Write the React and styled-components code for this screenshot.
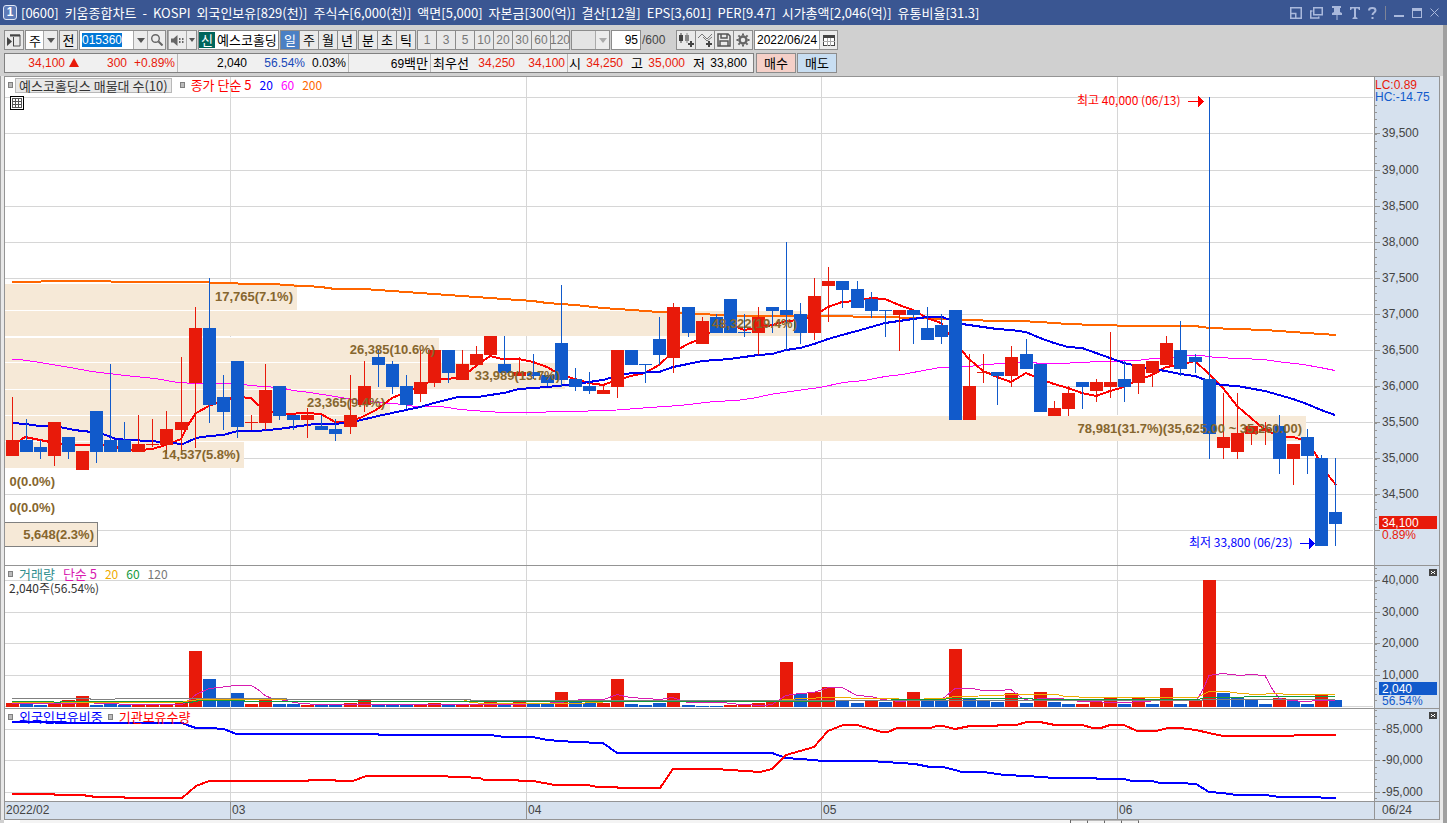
import React from 'react'
import styled, { createGlobalStyle } from 'styled-components';

const UP = "#e81a0a";
const DOWN = "#115acb";
const GRID = "#d6d6d6";
const FRAME = "#949494";
const AXIS_BG = "#d6e1ee";
const BAND = "#f6e9d7";
const NUMBER_FONT = '"Liberation Sans", "Noto Sans CJK KR", sans-serif';

// [color, high, open/close top, open/close bottom, low, volume top]
const candles = [
  ["r", 397, 440, 456, 456, 703], ["b", 419, 440, 452, 452, 703], ["b", 440, 447, 452, 459, 705],
  ["r", 422, 422, 456, 466, 703], ["b", 437, 437, 452, 459, 700], ["r", 451, 451, 470, 470, 696],
  ["b", 411, 411, 452, 463, 705], ["b", 364, 440, 452, 452, 704], ["b", 422, 440, 452, 452, 705],
  ["r", 415, 444, 452, 452, 705], ["r", 419, 444, 445, 447, 704], ["r", 411, 429, 445, 454, 704],
  ["r", 357, 422, 430, 451, 702], ["r", 307, 328, 383, 448, 651], ["b", 278, 328, 405, 423, 679],
  ["b", 375, 397, 412, 430, 700], ["b", 361, 361, 427, 438, 693], ["r", 415, 422, 423, 430, 704],
  ["r", 364, 390, 423, 430, 700], ["b", 386, 386, 416, 420, 704], ["b", 415, 415, 420, 430, 704],
  ["r", 408, 415, 420, 438, 705], ["b", 415, 426, 430, 430, 705], ["b", 419, 429, 434, 441, 704],
  ["r", 375, 415, 427, 434, 703], ["r", 361, 386, 405, 412, 700], ["b", 350, 357, 365, 387, 704],
  ["b", 361, 364, 387, 394, 704], ["b", 375, 386, 405, 409, 705], ["r", 350, 382, 394, 402, 704],
  ["r", 350, 350, 383, 387, 703], ["b", 350, 350, 373, 383, 705], ["r", 350, 364, 380, 380, 705],
  ["r", 346, 354, 365, 365, 704], ["r", 336, 336, 355, 355, 702], ["b", 336, 364, 373, 373, 705],
  ["r", 357, 372, 376, 376, 702], ["b", 354, 372, 376, 379, 704], ["b", 375, 375, 383, 386, 703],
  ["b", 285, 343, 380, 387, 692], ["b", 368, 379, 387, 391, 702], ["b", 372, 386, 391, 394, 703],
  ["r", 386, 390, 394, 394, 703], ["r", 350, 350, 387, 398, 679], ["b", 350, 350, 365, 365, 704],
  ["b", 364, 364, 365, 383, 705], ["b", 317, 339, 355, 365, 703], ["r", 303, 307, 358, 373, 693],
  ["b", 307, 307, 333, 337, 705], ["r", 317, 321, 344, 344, 706], ["b", 314, 317, 333, 333, 706],
  ["b", 299, 299, 333, 333, 705], ["b", 314, 332, 333, 337, 705], ["r", 307, 317, 333, 355, 703],
  ["b", 307, 307, 311, 333, 701], ["b", 242, 310, 315, 351, 662], ["b", 303, 314, 333, 344, 694],
  ["r", 278, 296, 333, 340, 692], ["r", 267, 281, 286, 322, 687], ["b", 281, 281, 290, 308, 700],
  ["b", 281, 289, 308, 308, 703], ["b", 292, 299, 311, 318, 700], ["b", 310, 310, 311, 337, 702],
  ["r", 310, 310, 315, 351, 700], ["b", 310, 310, 315, 344, 692], ["b", 307, 328, 340, 340, 700],
  ["b", 314, 325, 337, 344, 700], ["b", 310, 310, 420, 420, 649], ["r", 354, 386, 420, 420, 699],
  ["r", 354, 372, 373, 383, 700], ["b", 372, 372, 376, 405, 702], ["r", 346, 357, 376, 387, 693],
  ["b", 339, 354, 369, 369, 703], ["b", 364, 364, 412, 412, 692], ["r", 401, 408, 416, 416, 702],
  ["r", 386, 393, 409, 416, 704], ["b", 382, 382, 387, 409, 704], ["r", 379, 382, 391, 402, 702],
  ["r", 332, 382, 387, 398, 698], ["b", 361, 379, 387, 402, 704], ["r", 364, 364, 383, 394, 698],
  ["r", 361, 361, 373, 387, 704], ["r", 336, 343, 365, 365, 688], ["b", 321, 350, 369, 376, 704],
  ["b", 354, 357, 362, 373, 700], ["b", 97, 379, 434, 459, 580], ["r", 393, 437, 448, 459, 693],
  ["r", 393, 433, 452, 459, 698], ["r", 426, 426, 434, 445, 700], ["r", 422, 429, 431, 445, 704],
  ["b", 415, 426, 459, 474, 698], ["r", 444, 444, 459, 485, 701], ["b", 429, 437, 456, 474, 704],
  ["b", 455, 458, 546, 546, 695], ["b", 458, 512, 524, 546, 700],
];

// days whose volume colour is not the same as the candle colour
const volumeFlip = { 4: "r", 39: "r", 49: "b", 51: "r", 52: "r", 54: "r", 55: "r", 64: "r", 61: "r", 67: "r", 68: "b", 69: "b", 73: "r", 74: "b", 75: "b", 76: "r", 81: "b", 84: "r", 85: "r", 86: "b", 87: "b", 88: "b", 89: "b", 90: "r", 91: "b", 93: "r" };

const candleX = i => 12 + 14 * i + Math.floor(i / 12);

const priceLines = [
  { color: "#ff00ff", width: 1, points: "12,359 20,359 40,362 70,367 92,371 125,375 155,378 178,382 195,383 232,383 262,386 280,387 293,390 310,392 335,396 360,400 378,402 404,404 415,406 441,406 460,409 487,411 503,412 525,412 567,411 610,410 650,407 680,405 714,401 737,400 757,397 770,394 797,390 820,387 843,382 865,380 885,376 903,374 918,371 940,367 969,366 985,364 1004,363 1026,361 1040,363 1060,363 1100,361 1137,360 1153,358 1170,357 1187,355 1202,355 1215,357 1240,358 1263,359 1277,361 1303,364 1320,367 1335,370" },
  { color: "#ff6600", width: 2, points: "12,282 40,282 42,281 110,281 112,282 209,282 211,283 237,283 239,284 279,284 281,285 306,286 321,287 335,289 364,289 420,293 462,296 504,299 533,301 547,303 575,305 603,308 632,310 659,312 680,313 695,314 725,315 744,316 820,316 885,317 941,319 969,320 997,321 1020,321 1040,322 1068,324 1096,325 1138,326 1195,326 1209,328 1237,329 1265,330 1293,332 1321,334 1336,335" },
  { color: "#ff0000", width: 2, points: "12,446 25,437 40,440 55,443 74,445 110,445 125,450 140,450 152,449 166,445 181,439 188,425 196,413 209,406 223,400 238,397 251,398 258,405 272,412 286,414 307,413 321,414 335,422 345,422 360,418 376,410 392,398 406,392 420,386 434,380 448,379 462,377 476,366 490,356 502,359 519,359 533,362 547,367 561,375 575,379 589,383 603,385 617,380 631,376 645,373 659,365 673,352 688,344 702,338 712,331 730,325 737,327 744,330 758,328 772,325 786,321 800,320 814,316 828,307 842,302 857,301 871,298 885,299 899,305 913,310 927,318 941,323 949,334 955,343 962,351 969,359 983,371 997,377 1011,382 1026,373 1040,379 1054,384 1068,388 1082,393 1096,396 1110,391 1124,387 1138,380 1152,375 1166,367 1180,365 1195,361 1209,374 1223,388 1237,406 1251,418 1265,430 1279,436 1293,437 1307,441 1318,458 1321,466 1328,475 1336,485" },
  { color: "#0000ee", width: 2, points: "12,423 25,424 40,426 60,427 74,430 92,432 103,434 116,439 130,440 150,441 162,442 170,443 183,444 196,438 209,436 223,435 238,431 256,431 279,429 300,426 315,424 335,424 350,422 357,421 378,416 406,410 420,407 434,403 458,397 478,397 490,395 504,393 519,389 547,387 575,384 589,382 603,380 617,376 631,373 659,372 673,367 688,364 702,361 730,359 758,355 772,354 786,350 800,348 814,344 828,339 842,335 857,331 871,327 885,323 899,321 913,319 927,317 942,317 962,324 983,327 997,329 1011,330 1026,332 1040,338 1054,343 1068,347 1082,348 1096,353 1110,358 1124,363 1138,366 1152,369 1166,371 1180,374 1195,376 1203,379 1213,382 1220,385 1237,386 1265,391 1293,399 1307,404 1321,410 1335,415" },
];

const volumeLines = [
  { color: "#d81bb0", width: 1, points: "12,703 70,703 85,702 103,703 135,704 182,704 188,701 196,694 209,688 228,686 234,685 251,685 258,689 265,695 272,698 285,700 300,703 320,704 512,704 540,703 560,702 582,699 604,699 617,694 630,697 660,699 672,697 688,702 722,702 740,704 765,705 772,704 786,695 800,693 814,692 828,687 842,687 857,695 871,696 882,699 900,701 913,700 943,698 955,688 972,688 983,690 1000,690 1011,689 1022,698 1030,700 1040,698 1061,698 1080,701 1124,702 1160,700 1190,700 1197,699 1203,689 1209,675 1222,673 1240,675 1251,674 1265,675 1272,688 1279,698 1290,700 1305,701 1320,700 1335,700" },
  { color: "#efab00", width: 1, points: "12,702 180,702 190,700 202,699 257,699 272,699 463,699 470,702 485,703 580,703 590,702 617,701 770,701 786,699 805,698 828,697 850,697 852,698 892,698 905,699 943,698 955,696 1003,695 1005,694 1057,694 1065,696 1092,697 1197,697 1209,691 1226,691 1240,693 1258,694 1275,693 1290,694 1335,694" },
  { color: "#129a3c", width: 1, points: "12,701 47,701 60,702 61,701 175,701 190,702 200,700 244,700 245,701 780,701 890,700 893,699 943,699 950,698 1032,698 1034,699 1198,699 1205,697 1243,697 1245,696 1335,696" },
  { color: "#808080", width: 1, points: "12,698 90,698 91,699 140,698 286,698 287,699 470,699 471,700 1200,700 1205,699 1335,699" },
];

const holdingLines = [
  { color: "#0000ff", width: 2, points: "12,722 55,722 56,723 182,723 190,726 196,728 210,728 224,729 236,734 378,734 379,735 490,735 505,737 533,737 547,740 575,742 603,743 617,753 772,753 786,758 814,760 822,761 870,761 900,763 915,764 930,767 943,767 955,770 962,772 983,772 1005,775 1027,776 1055,778 1096,778 1097,779 1124,779 1132,781 1152,781 1160,783 1180,783 1196,784 1209,792 1222,793 1237,795 1265,795 1280,797 1320,797 1322,798 1336,798" },
  { color: "#ff0000", width: 2, points: "12,794 54,794 55,795 82,795 96,797 124,797 125,798 182,798 189,792 196,786 209,781 308,781 309,780 335,780 336,781 353,781 366,776 434,776 462,777 480,778 484,780 518,780 519,781 533,781 555,785 588,785 597,787 617,787 618,788 660,788 673,769 716,769 730,770 745,771 760,772 772,769 786,755 800,751 814,747 828,731 843,725 857,725 871,729 882,732 888,732 897,728 930,728 937,726 943,726 955,729 960,728 970,726 997,726 998,725 1016,725 1027,722 1040,722 1055,725 1082,725 1093,728 1101,728 1110,725 1124,725 1137,731 1156,731 1168,728 1180,728 1196,730 1209,733 1223,736 1293,736 1295,735 1336,735" },
];

// price-range volume bands: [top, height, right edge]
const bands = [
  [284, 26, 297], [311, 25, 802], [338, 24, 439], [363, 26, 565],
  [390, 25, 390], [416, 25, 1306], [442, 26, 244],
];

const bandLabels = [
  [293, 301, "17,765(7.1%)"], [797, 328, "48,322(19.4%)"], [435, 354, "26,385(10.6%)"],
  [560, 380, "33,989(13.7%)"], [385, 407, "23,365(9.4%)"],
  [1302, 433, "78,981(31.7%)(35,625.00 ~ 35,260.00)"], [240, 459, "14,537(5.8%)"],
  [55, 486, "0(0.0%)"], [55, 512, "0(0.0%)"], [94, 539, "5,648(2.3%)"],
];

const priceRows = [97, 133, 170, 206, 242, 278, 314, 350, 386, 422, 458, 494, 530];
const months = [[230, "03"], [526, "04"], [821, "05"], [1117, "06"]];

const titleParts = [
  "[0600]", "키움종합차트", "-", "KOSPI", "외국인보유[829(천)]", "주식수[6,000(천)]", "액면[5,000]",
  "자본금[300(억)]", "결산[12월]", "EPS[3,601]", "PER[9.47]", "시가총액[2,046(억)]", "유통비율[31.3]",
];

function range(from, to, step) {
  const list = [];
  for (let v = from; v <= to; v += step) list.push(Math.round(v));
  return list;
}

function Grid({ rows, top, bottom }) {
  return (
    <g fill={GRID}>
      {rows.map(y => <rect key={y} x="5" y={y} width="1368" height="1" />)}
      {months.map(([x]) => <rect key={x} x={x} y={top} width="1" height={bottom - top} />)}
    </g>
  );
}

function Lines({ lines }) {
  return lines.map(({ color, width, points }) => (
    <polyline
      key={color}
      points={points}
      fill="none"
      stroke={color}
      strokeWidth={width}
      transform={width === 1 ? "translate(0 0.5)" : undefined}
    />
  ));
}

function Ticks({ major, minor }) {
  return (
    <g fill={FRAME}>
      {major.map(y => <rect key={"a" + y} x="1375" y={y} width="5" height="1" />)}
      {minor.map(y => <rect key={"i" + y} x="1375" y={y} width="2" height="1" />)}
    </g>
  );
}

function PriceChart() {
  return (
    <Drawing viewBox="5 77 1369 488" $height={488}>
      <Grid rows={priceRows} top={77} bottom={565} />
      {bands.map(([y, h, right]) => (
        <g key={y}>
          <rect x="5" y={y - 1} width={right - 5} height={h + 1} fill="#fff" />
          <rect x="5" y={y} width={right - 5} height={h} fill={BAND} />
        </g>
      ))}
      <rect x="4.5" y="522.5" width="93" height="24" fill={BAND} stroke="#808080" />
      <Lines lines={priceLines} />
      {candles.map(([c, high, top, bottom, low], i) => (
        <g key={i} fill={c === "r" ? UP : DOWN}>
          <rect x={candleX(i)} y={high} width="1" height={low - high} />
          <rect x={candleX(i) - 6} y={top} width="13" height={bottom - top} />
        </g>
      ))}
      {bandLabels.map(([x, y, text]) => <BandLabel key={y} x={x} y={y}>{text}</BandLabel>)}
      <Note x="1077" y="105" fill="#ff0000">최고 40,000 (06/13)</Note>
      <path d="M1188 101h10v-5l6 5.500l-6 5.500v-5h-10z" fill="#ff0000" />
      <Note x="1189" y="547" fill="#0000ff">최저 33,800 (06/23)</Note>
      <path d="M1300 543h9v-5l6 5.500l-6 5.500v-5h-9z" fill="#0000ff" />
    </Drawing>
  );
}

function PriceAxis() {
  return (
    <Drawing viewBox="1375 77 64 488" $height={488}>
      <Ticks major={priceRows.slice(1)} minor={range(105, 530, 7.22)} />
      <AxisText x="1375" y="89" fill={UP}>LC:0.89</AxisText>
      <AxisText x="1375" y="101" fill={DOWN}>HC:-14.75</AxisText>
      {priceRows.slice(1, -1).map((y, i) => (
        <AxisText key={y} x="1382" y={y + 4}>{(39500 - i * 500).toLocaleString("en-US")}</AxisText>
      ))}
      <rect x="1379" y="516" width="58" height="13" fill={UP} />
      <AxisText x="1382" y="527" fill="#fff">34,100</AxisText>
      <AxisText x="1382" y="539" fill={UP}>0.89%</AxisText>
    </Drawing>
  );
}

function VolumeChart() {
  return (
    <Drawing viewBox="5 566 1369 142" $height={142}>
      <Grid rows={[580, 612, 643, 675, 706]} top={566} bottom={708} />
      {candles.map((c, i) => (
        <rect
          key={i}
          x={candleX(i) - 6}
          y={c[5]}
          width="13"
          height={707 - c[5]}
          fill={(volumeFlip[i] || c[0]) === "r" ? UP : DOWN}
        />
      ))}
      <Lines lines={volumeLines} />
    </Drawing>
  );
}

function VolumeAxis() {
  return (
    <Drawing viewBox="1375 566 64 142" $height={142}>
      <Ticks major={[580, 612, 643, 675]} minor={range(568, 706, 6.3)} />
      <AxisText x="1382" y="584">40,000</AxisText>
      <AxisText x="1382" y="616">30,000</AxisText>
      <AxisText x="1382" y="647">20,000</AxisText>
      <AxisText x="1382" y="679">10,000</AxisText>
      <rect x="1379" y="682" width="58" height="13" fill={DOWN} />
      <AxisText x="1382" y="693" fill="#fff">2,040</AxisText>
      <AxisText x="1382" y="705" fill={DOWN}>56.54%</AxisText>
    </Drawing>
  );
}

function HoldingChart() {
  return (
    <Drawing viewBox="5 709 1369 92" $height={92}>
      <Grid rows={[729, 760, 792]} top={709} bottom={801} />
      <Lines lines={holdingLines} />
    </Drawing>
  );
}

function HoldingAxis() {
  return (
    <Drawing viewBox="1375 709 64 92" $height={92}>
      <Ticks major={[729, 760, 792]} minor={range(710, 800, 6.3)} />
      <AxisText x="1382" y="733">-85,000</AxisText>
      <AxisText x="1382" y="764">-90,000</AxisText>
      <AxisText x="1382" y="796">-95,000</AxisText>
    </Drawing>
  );
}

function DateAxis() {
  return (
    <Drawing viewBox="5 802 1369 17" $height={17}>
      <AxisText x="6" y="814">2022/02</AxisText>
      {months.map(([x, label]) => (
        <g key={x}>
          <rect x={x} y="802" width="1" height="17" fill={FRAME} />
          <AxisText x={x + 2} y="814">{label}</AxisText>
        </g>
      ))}
    </Drawing>
  );
}

const Arrow = () => (
  <svg width="8" height="5" viewBox="0 0 8 5"><path d="M0 0h8L4 5z" fill="currentColor" /></svg>
);

function CloseMark() {
  return (
    <CloseButton aria-label="닫기">
      <svg width="8" height="7" viewBox="0 0 8 7" shapeRendering="crispEdges">
        <path d="M2 2h1v1h2v-1h1v1h-1v1h1v1h-1v-1h-2v1h-1v-1h1v-1h-1z" fill="#fff" />
      </svg>
    </CloseButton>
  );
}

function TitleIcons() {
  return (
    <WindowButtons>
      <WindowButton aria-label="분할">
        <svg width="12" height="12" viewBox="0 0 12 12" fill="none" stroke="currentColor" strokeWidth="1.500">
          <path d="M0.750 0.750h10.500v10.500h-10.500zM0.750 6.500h5v5" />
        </svg>
      </WindowButton>
      <WindowButton aria-label="복사">
        <svg width="13" height="12" viewBox="0 0 13 12" fill="none" stroke="currentColor" strokeWidth="1.500">
          <path d="M3.750 0.750h8.500v7h-8.500zM2.500 4h-1.750v7h8v-1.500" />
        </svg>
      </WindowButton>
      <WindowButton aria-label="고정">
        <svg width="11" height="14" viewBox="0 0 11 14" fill="currentColor">
          <path d="M1 0h9v2h-1v4l2 1v2h-4.500v5h-1v-5h-4.500v-2l2-1v-4h-2z" />
        </svg>
      </WindowButton>
      <WindowButton aria-label="글꼴">
        <svg width="10" height="12" viewBox="0 0 10 12" fill="currentColor">
          <path d="M0 0h10v3h-1l-1-1.500h-2v8.500l1.500 1v1h-5v-1l1.500-1v-8.500h-2l-1 1.500h-1z" />
        </svg>
      </WindowButton>
      <WindowButton aria-label="도움말">
        <svg width="9" height="12" viewBox="0 0 9 12" fill="none" stroke="currentColor" strokeWidth="2">
          <path d="M1 3.500c0-3.300 6.500-3.300 6.500 0c0 2-3 2-3 4.500M4.500 10v2" />
        </svg>
      </WindowButton>
      <WindowDivider />
      <WindowButton aria-label="최소화">
        <svg width="10" height="12" viewBox="0 0 10 12"><rect y="8" width="10" height="2" fill="currentColor" /></svg>
      </WindowButton>
      <WindowButton aria-label="최대화">
        <svg width="10" height="10" viewBox="0 0 10 10" fill="currentColor">
          <path fillRule="evenodd" d="M0 0h10v10h-10zM1 3v6h8v-6z" />
        </svg>
      </WindowButton>
      <WindowButton aria-label="창 닫기">
        <svg width="9" height="9" viewBox="0 0 9 9" stroke="currentColor"><path d="M0.500 0.500l8 8M8.500 0.500l-8 8" /></svg>
      </WindowButton>
    </WindowButtons>
  );
}

function Toolbar() {
  const [period, setPeriod] = React.useState("일");
  const [code, setCode] = React.useState("015360");
  const codeRef = React.useRef(null);
  React.useEffect(() => {
    codeRef.current.focus();
    codeRef.current.select();
  }, []);
  return (
    <ToolRow>
      <ToolButton $width={20} aria-label="목록">
        <svg width="14" height="13" viewBox="0 0 14 13">
          <path d="M3 1h10v11h-7" fill="none" stroke="#555" />
          <path d="M3 0.500h10v2h-10zM0 3l5 4.500l-5 4.500zM6 3h1v9h-1z" fill="#444" />
        </svg>
      </ToolButton>
      <SelectBox $width={33}>
        <Select aria-label="종목 구분" defaultValue="주"><option>주</option></Select>
        <SelectArrow><Arrow /></SelectArrow>
      </SelectBox>
      <ToolButton $width={19}>전</ToolButton>
      <Joined $width={87}>
        <CodeInput ref={codeRef} aria-label="종목코드" value={code} onChange={e => setCode(e.target.value)} />
        <InnerButton $width={14} aria-label="최근 종목"><Arrow /></InnerButton>
        <InnerButton $width={18} aria-label="검색">
          <svg width="12" height="12" viewBox="0 0 12 12" fill="none" stroke="#666">
            <circle cx="4.500" cy="4.500" r="3.800" strokeWidth="1.400" /><path d="M7.500 7.500l4 4" strokeWidth="2" />
          </svg>
        </InnerButton>
      </Joined>
      <Joined $width={30}>
        <InnerButton $width={18} aria-label="소리">
          <svg width="13" height="11" viewBox="0 0 13 11" fill="#666">
            <path d="M0 3.500h2.500l4-3.500v11l-4-3.500h-2.500zM8 3h1.500v2h-1.500zM8 6h1.500v2h-1.500zM11 3h1.500v2h-1.500zM11 6h1.500v2h-1.500z" />
          </svg>
        </InnerButton>
        <InnerButton $width={10} aria-label="소리 설정">
          <svg width="6" height="4" viewBox="0 0 6 4"><path d="M0 0h6L3 4z" fill="#555" /></svg>
        </InnerButton>
      </Joined>
      <StockName>
        <Badge>신</Badge>
        예스코홀딩
      </StockName>
      <ButtonGroup>
        {["일", "주", "월", "년"].map(p => (
          <ToolButton key={p} $width={20} $active={p === period} onClick={() => setPeriod(p)}>{p}</ToolButton>
        ))}
      </ButtonGroup>
      <ButtonGroup>
        {["분", "초", "틱"].map(p => (
          <ToolButton key={p} $width={20} $active={p === period} onClick={() => setPeriod(p)}>{p}</ToolButton>
        ))}
      </ButtonGroup>
      <ButtonGroup>
        {["1", "3", "5", "10", "20", "30", "60", "120"].map(n => (
          <MinuteButton key={n} $width={20}>{n}</MinuteButton>
        ))}
      </ButtonGroup>
      <SelectBox $width={39} $disabled>
        <Select aria-label="간격" disabled><option></option></Select>
        <SelectArrow><Arrow /></SelectArrow>
      </SelectBox>
      <CountInput aria-label="봉 개수" defaultValue="95" />
      <Total>/600</Total>
      <ButtonGroup>
        <ToolButton $width={20} aria-label="봉 추가">
          <svg width="15" height="14" viewBox="0 0 15 14" fill="#444">
            <path d="M0 2h1.500v-2h1v2h1.500v6h-1.500v2h-1v-2h-1.500z" />
            <path d="M6 2h1.500v-2h1v2h1.500v6h-1.500v2h-1v-2h-1.500z" fill="#888" />
            <path d="M11 8h2v2h2v2h-2v2h-2v-2h-2v-2h2z" />
          </svg>
        </ToolButton>
        <ToolButton $width={20} aria-label="지표 추가">
          <svg width="15" height="14" viewBox="0 0 15 14">
            <path d="M0 5l4-4l5 5l5-5M5 4l4 4l5-4" fill="none" stroke="#777" />
            <path d="M10 8h2v2h2v2h-2v2h-2v-2h-2v-2h2z" fill="#444" />
          </svg>
        </ToolButton>
        <ToolButton $width={20} aria-label="저장">
          <svg width="14" height="14" viewBox="0 0 14 14" fill="none" stroke="#555" strokeWidth="1.500">
            <path d="M1 1h10l2 2v10h-12zM4 1v4h6v-4M3 13v-5h8v5" />
          </svg>
        </ToolButton>
        <ToolButton $width={20} aria-label="설정">
          <svg width="14" height="14" viewBox="0 0 14 14" fill="none" stroke="#666">
            <circle cx="7" cy="7" r="3.500" strokeWidth="2.500" />
            <path d="M7 0.500v2M7 11.500v2M0.500 7h2M11.500 7h2M2.400 2.400l1.500 1.500M10.100 10.100l1.500 1.500M11.600 2.400l-1.500 1.500M3.900 10.100l-1.500 1.500" strokeWidth="2" />
          </svg>
        </ToolButton>
      </ButtonGroup>
      <Joined $width={84}>
        <DateInput aria-label="날짜" defaultValue="2022/06/24" />
        <InnerButton $width={18} aria-label="달력">
          <svg width="12" height="11" viewBox="0 0 12 11">
            <rect x="0.500" y="0.500" width="11" height="10" fill="#fff" stroke="#444" />
            <path d="M0 0h12v3h-12z" fill="#444" />
            <path d="M4.500 3v8M7.500 3v8M0 6.500h12" stroke="#aaa" />
          </svg>
        </InnerButton>
      </Joined>
    </ToolRow>
  );
}

function Quotes() {
  return (
    <ToolRow>
      <QuoteBar>
        <QuoteCell>
          <Value $width={60} $color={UP}>34,100</Value>
          <Value $width={14}>
            <svg width="10" height="9" viewBox="0 0 10 9"><path d="M5 0l5 9h-10z" fill={UP} /></svg>
          </Value>
          <Value $width={48} $color={UP}>300</Value>
          <Value $width={48} $color={UP}>+0.89%</Value>
        </QuoteCell>
        <QuoteCell>
          <Value $width={69}>2,040</Value>
          <Value $width={58} $color="#1848b8">56.54%</Value>
          <Value $width={41}>0.03%</Value>
        </QuoteCell>
        <QuoteCell>
          <Value $width={79}>69<Hangul>백만</Hangul></Value>
        </QuoteCell>
        <QuoteCell>
          <Value $width={38}><Hangul>최우선</Hangul></Value>
          <Value $width={46} $color={UP}>34,250</Value>
          <Value $width={50} $color={UP}>34,100</Value>
        </QuoteCell>
        <QuoteCell>
          <Value $width={13}><Hangul>시</Hangul></Value>
          <Value $width={42} $color={UP}>34,250</Value>
          <Value $width={20}><Hangul>고</Hangul></Value>
          <Value $width={42} $color={UP}>35,000</Value>
          <Value $width={20}><Hangul>저</Hangul></Value>
          <Value $width={42}>33,800</Value>
        </QuoteCell>
      </QuoteBar>
      <OrderButton $color="#f5d0c8">매수</OrderButton>
      <OrderButton $color="#c8def2">매도</OrderButton>
    </ToolRow>
  );
}

export default function App() {
  return (
    <Window>
      <GlobalStyle />
      <TitleBar>
        <ScreenNumber>1</ScreenNumber>
        <Title>{titleParts.map(part => <span key={part}>{part}</span>)}</Title>
        <TitleIcons />
      </TitleBar>
      <Frame>
        <Tools>
          <Toolbar />
          <Quotes />
        </Tools>
        <Charts>
          <Panel>
            <Plot>
              <PriceChart />
              <Legend>
                <LegendRow>
                  <LegendItem $gap={2}><Marker /><SelectedSeries>예스코홀딩스 매물대 수(10)</SelectedSeries></LegendItem>
                  <LegendItem><Marker /><Series $color="#ff0000">종가 단순 5</Series></LegendItem>
                  <SeriesNumber $color="#0000ff">20</SeriesNumber>
                  <SeriesNumber $color="#ff00ff">60</SeriesNumber>
                  <SeriesNumber $color="#ff6600">200</SeriesNumber>
                </LegendRow>
                <TableButton aria-label="표 보기">
                  <svg width="10" height="10" viewBox="0 0 10 10" fill="none" stroke="#555" shapeRendering="crispEdges">
                    <path d="M0.500 0.500h9v9h-9zM3.500 0v10M6.500 0v10M0 3.500h10M0 6.500h10" />
                  </svg>
                </TableButton>
              </Legend>
            </Plot>
            <Axis><PriceAxis /></Axis>
          </Panel>
          <Panel>
            <Plot>
              <VolumeChart />
              <Legend>
                <LegendRow>
                  <LegendItem><Marker /><Series $color="#2f8f8f">거래량</Series></LegendItem>
                  <Series $color="#d81bb0">단순 5</Series>
                  <SeriesNumber $color="#efab00">20</SeriesNumber>
                  <SeriesNumber $color="#129a3c">60</SeriesNumber>
                  <SeriesNumber $color="#777">120</SeriesNumber>
                </LegendRow>
                <LegendValue>2,040주(56.54%)</LegendValue>
              </Legend>
            </Plot>
            <Axis><VolumeAxis /><CloseMark /></Axis>
          </Panel>
          <Panel>
            <Plot>
              <HoldingChart />
              <Legend>
                <LegendRow $gap={5}>
                  <LegendItem><Marker /><Series $color="#0000ff">외국인보유비중</Series></LegendItem>
                  <LegendItem><Marker /><Series $color="#ff0000">기관보유수량</Series></LegendItem>
                </LegendRow>
              </Legend>
            </Plot>
            <Axis><HoldingAxis /><CloseMark /></Axis>
          </Panel>
          <Panel>
            <DatePlot><DateAxis /></DatePlot>
            <Axis><LastDate>06/24</LastDate></Axis>
          </Panel>
        </Charts>
        <BottomBar>
          <ScrollTrack />
          {[1, 2, 3, 4].map(n => <BottomTab key={n} />)}
          <BottomRest />
        </BottomBar>
      </Frame>
    </Window>
  );
}

const GlobalStyle = createGlobalStyle`
  * {
    box-sizing: border-box;
  }
  body {
    margin: 0;
    overflow: hidden;
    background: #d0d0d0;
  }
  body, button, input, select {
    font-family: "Noto Sans CJK KR", sans-serif;
    font-size: 13px;
  }
`;

const Window = styled.div`
  height: 100vh;
  display: flex;
  flex-direction: column;
`;

const TitleBar = styled.header`
  height: 25px;
  flex: none;
  display: flex;
  align-items: center;
  padding: 0 8px 0 3px;
  background: #3a5692;
  color: #fff;
`;

const ScreenNumber = styled.span`
  width: 14px;
  height: 15px;
  border: 1px solid #dfe6f5;
  border-radius: 3px;
  background: #5d7bb8;
  font: bold 12px/13px "Liberation Sans", sans-serif;
  text-align: center;
`;

const Title = styled.h1`
  display: flex;
  gap: 6px;
  margin: 0 0 0 4px;
  font-size: 13px;
  font-weight: normal;
  line-height: 20px;
  white-space: nowrap;
`;

const WindowButtons = styled.div`
  display: flex;
  align-items: center;
  gap: 8px;
  margin-left: auto;
  color: #aab9dc;
`;

const WindowButton = styled.button`
  display: flex;
  padding: 0;
  border: 0;
  background: none;
  color: inherit;
`;

const WindowDivider = styled.span`
  width: 1px;
  height: 14px;
  background: #7f8496;
`;

const Frame = styled.main`
  flex: 1;
  min-height: 0;
  display: flex;
  flex-direction: column;
  border-right: 4px solid #a0a0a0;
`;

const Tools = styled.div`
  flex: none;
  display: flex;
  flex-direction: column;
  gap: 3px;
  padding: 5px 4px 3px;
  background: #d0d0d0;
`;

const ToolRow = styled.div`
  height: 20px;
  display: flex;
  align-items: stretch;
  gap: 1px;
  white-space: nowrap;
`;

const ToolButton = styled.button`
  flex: none;
  width: ${p => p.$width}px;
  display: flex;
  align-items: center;
  justify-content: center;
  padding: 0;
  border: 1px solid #8c8c8c;
  background: ${p => (p.$active ? "#4a80c4" : "#e9e9e9")};
  color: ${p => (p.$active ? "#fff" : "#000")};
  line-height: 18px;
`;

const MinuteButton = styled(ToolButton)`
  color: #777;
  font-family: ${NUMBER_FONT};
  font-size: 12px;
`;

const ButtonGroup = styled.div`
  display: flex;
  & > button + button {
    margin-left: -1px;
  }
`;

const SelectBox = styled.div`
  position: relative;
  width: ${p => p.$width}px;
  border: 1px solid #8c8c8c;
  background: ${p => (p.$disabled ? "#e4e4e4" : "#fff")};
  color: ${p => (p.$disabled ? "#aaa" : "#555")};
`;

const Select = styled.select`
  display: block;
  width: 100%;
  height: 18px;
  padding: 0 0 0 3px;
  border: 0;
  appearance: none;
  background: transparent;
  color: #000;
  outline: none;
`;

const SelectArrow = styled.span`
  position: absolute;
  top: 0;
  right: 0;
  bottom: 0;
  width: 14px;
  display: flex;
  align-items: center;
  justify-content: center;
  border-left: 1px solid #aaa;
  background: #ececec;
  pointer-events: none;
`;

const Joined = styled.div`
  width: ${p => p.$width}px;
  display: flex;
  border: 1px solid #8c8c8c;
  background: #fff;
`;

const InnerButton = styled.button`
  flex: none;
  width: ${p => p.$width}px;
  display: flex;
  align-items: center;
  justify-content: center;
  padding: 0;
  border: 0;
  border-left: 1px solid #aaa;
  background: #ececec;
  color: #555;
`;

const TextInput = styled.input`
  min-width: 0;
  border: 0;
  padding: 0 0 0 2px;
  background: #fff;
  color: #000;
  font-family: ${NUMBER_FONT};
  font-size: 12px;
  outline: none;
`;

const CodeInput = styled(TextInput)`
  flex: 1;
  &::selection {
    background: #0078d7;
    color: #fff;
  }
`;

const DateInput = styled(TextInput)`
  flex: 1;
`;

const CountInput = styled(TextInput)`
  width: 30px;
  padding: 0 2px 0 0;
  border: 1px solid #8c8c8c;
  text-align: right;
`;

const Total = styled.span`
  width: 33px;
  color: #444;
  font-family: ${NUMBER_FONT};
  font-size: 12px;
  line-height: 20px;
`;

const StockName = styled.div`
  width: 81px;
  display: flex;
  align-items: center;
  gap: 2px;
  overflow: hidden;
  border: 1px solid #8c8c8c;
  background: #fff;
  line-height: 18px;
`;

const Badge = styled.span`
  flex: none;
  width: 16px;
  height: 16px;
  background: #00665c;
  color: #fff;
  line-height: 16px;
  text-align: center;
`;

const QuoteBar = styled.div`
  display: flex;
  margin-right: 1px;
  padding-right: 4px;
  border: 1px solid #808080;
  background: #f0f0f0;
`;

const QuoteCell = styled.div`
  display: flex;
  align-items: center;
  padding-right: 2px;
  & + & {
    border-left: 1px solid #b8b8b8;
  }
`;

const Value = styled.span`
  width: ${p => p.$width}px;
  color: ${p => p.$color || "#000"};
  font-family: ${NUMBER_FONT};
  font-size: 12px;
  line-height: 18px;
  text-align: right;
`;

const Hangul = styled.span`
  font-family: "Noto Sans CJK KR", sans-serif;
  font-size: 13px;
`;

const OrderButton = styled.button`
  width: 40px;
  padding: 0;
  border: 1px solid #8c8c8c;
  background: ${p => p.$color};
  line-height: 18px;
`;

const Charts = styled.section`
  flex: none;
  padding: 0 3px;
  background: #e8e8e8;
  border-left: 1px solid #a0a0a0;
`;

const Panel = styled.div`
  display: grid;
  grid-template-columns: minmax(0, 1fr) 65px;
  border: 1px solid ${FRAME};
  border-bottom: 0;
  &:last-child {
    border-bottom: 1px solid ${FRAME};
  }
`;

const Plot = styled.div`
  position: relative;
  background: #fff;
`;

const DatePlot = styled.div`
  background: ${AXIS_BG};
`;

const Axis = styled.div`
  position: relative;
  border-left: 1px solid ${FRAME};
  background: ${AXIS_BG};
`;

const Drawing = styled.svg.attrs({
  preserveAspectRatio: "none",
  shapeRendering: "crispEdges",
})`
  display: block;
  width: 100%;
  height: ${p => p.$height}px;
`;

const AxisText = styled.text`
  font-family: ${NUMBER_FONT};
  font-size: 12px;
  fill: ${p => p.fill || "#444"};
`;

const Note = styled.text`
  font-size: 12px;
`;

const BandLabel = styled.text`
  fill: #86662e;
  font-family: "Liberation Sans", sans-serif;
  font-size: 13px;
  font-weight: bold;
  text-anchor: end;
`;

const LastDate = styled.div`
  padding-left: 7px;
  color: #444;
  font-family: ${NUMBER_FONT};
  font-size: 12px;
  line-height: 16px;
`;

const Legend = styled.div`
  position: absolute;
  top: 0;
  left: 3px;
`;

const LegendRow = styled.div`
  display: flex;
  align-items: center;
  gap: ${p => p.$gap || 8}px;
  height: 16px;
  white-space: nowrap;
`;

const LegendItem = styled.span`
  display: flex;
  align-items: center;
  gap: ${p => p.$gap || 6}px;
`;

const Marker = styled.span`
  width: 5px;
  height: 6px;
  border: 1px solid #808080;
  background: #bbb;
`;

const Series = styled.span`
  color: ${p => p.$color};
  line-height: 16px;
`;

const SeriesNumber = styled(Series)`
  font-size: 12px;
`;

const SelectedSeries = styled.span`
  padding: 0 3px;
  border: 1px solid #b8b8b8;
  background: #e8e8e8;
  color: #333;
  line-height: 13px;
`;

const LegendValue = styled.div`
  padding-left: 1px;
  color: #333;
  font-size: 12px;
  line-height: 12px;
`;

const TableButton = styled.button`
  display: flex;
  margin: 3px 0 0 2px;
  padding: 1px;
  border: 1px solid #000;
  background: #fff;
`;

const CloseButton = styled.button`
  position: absolute;
  top: 3px;
  right: 2px;
  display: flex;
  padding: 0;
  border: 0;
  background: #444;
`;

const BottomBar = styled.footer`
  flex: 1;
  display: flex;
  min-height: 0;
  margin-left: 4px;
  background: #f0f0f0;
`;

const ScrollTrack = styled.div`
  flex: 1;
  border-left: 16px solid #fff;
  border-right: 1px solid #666;
  background: #f4f4f4;
`;

const BottomTab = styled.div`
  width: 17px;
  border-top: 1px solid #bbb;
  border-right: 1px solid #666;
  background: #f4f4f4;
`;

const BottomRest = styled.div`
  width: 304px;
`;
